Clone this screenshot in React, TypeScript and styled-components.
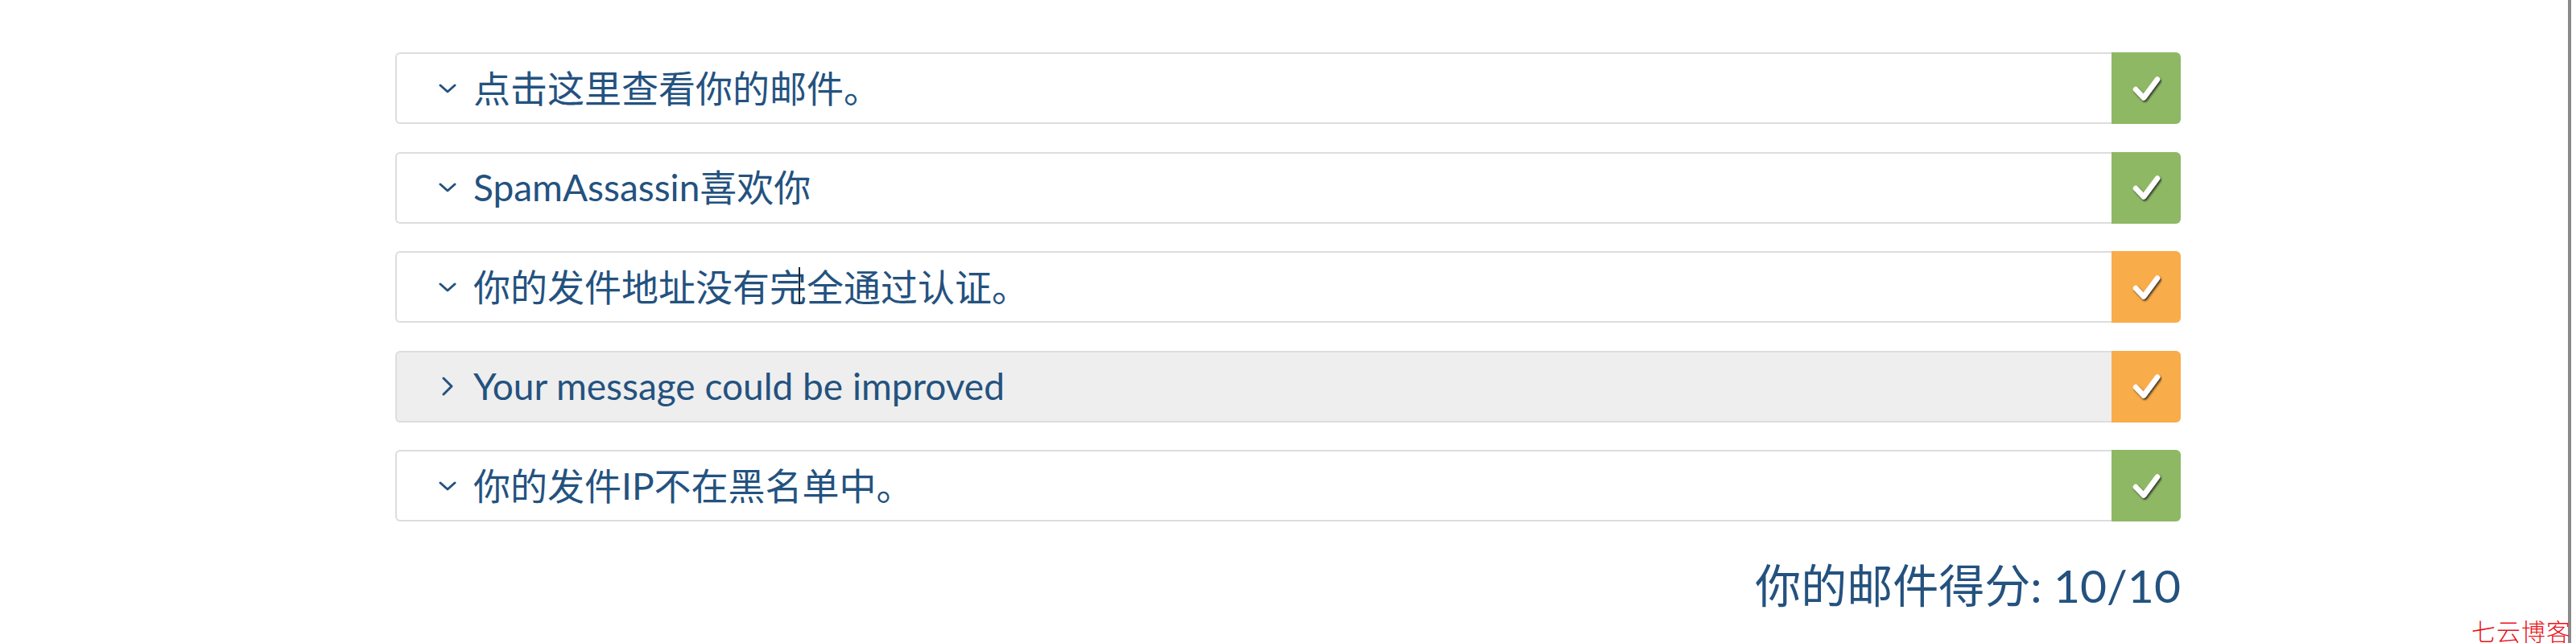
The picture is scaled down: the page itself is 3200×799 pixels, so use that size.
import * as React from "react";
import styled, { createGlobalStyle } from "styled-components";

const GlobalStyle = createGlobalStyle`
    html, body {
        margin: 0;
        padding: 0;
        background: #ffffff;
    }
    body {
        font-family: "Lato", "Noto Sans CJK SC", sans-serif;
        overflow: hidden;
    }
`;

const Page = styled.div`
    position: relative;
    width: 3200px;
    height: 799px;
    padding-top: 65px;
    box-sizing: border-box;
`;

const Report = styled.div`
    width: 2218px;
    margin: 0 auto;
    display: flex;
    flex-direction: column;
    gap: 34.5px;
`;

const Row = styled.div`
    position: relative;
    display: flex;
    height: 89px;
`;

const Header = styled.div<{ $hover: boolean }>`
    flex: 1;
    display: flex;
    align-items: center;
    padding-left: 51px;
    gap: 20px;
    border: 2px solid #dddddd;
    border-right: none;
    border-radius: 6px 0 0 6px;
    background: ${p => (p.$hover ? "#eeeeee" : "#ffffff")};
    color: #24527f;
    font-size: 46px;
    cursor: pointer;
`;

const Chevron = styled.span`
    width: 24px;
    display: flex;
    justify-content: center;
    align-items: center;
    color: #24527f;
`;

const Title = styled.span`
    white-space: nowrap;
    line-height: 1;
`;

const Status = styled.div<{ $tone: "ok" | "warn" }>`
    width: 86px;
    display: flex;
    align-items: center;
    justify-content: center;
    border-radius: 0 6px 6px 0;
    background: ${p => (p.$tone === "ok" ? "#8fb865" : "#f9ac4a")};
`;

const Caret = styled.span`
    position: absolute;
    left: 501px;
    top: 20px;
    width: 2px;
    height: 46px;
    background: #1d2733;
`;

const Score = styled.div`
    margin-top: 45px;
    text-align: right;
    color: #24527f;
    font-size: 57px;
    line-height: 68px;
`;

const Scrollbar = styled.div`
    position: absolute;
    top: 0;
    right: 6px;
    width: 4px;
    height: 100%;
    background: #8a8a8a;
`;

const Watermark = styled.div`
    position: absolute;
    right: 6px;
    bottom: -6px;
    color: #e8141b;
    font-family: "Noto Sans CJK SC", sans-serif;
    font-weight: 300;
    font-size: 30px;
    letter-spacing: 1px;
`;

const Check = () => (
    <svg width="40" height="40" viewBox="0 0 40 40">
        <defs>
            <filter id="checkShadow" x="-30%" y="-30%" width="160%" height="160%">
                <feDropShadow dx="1.5" dy="2" stdDeviation="1" floodColor="#1b1b1b" floodOpacity="0.85" />
            </filter>
        </defs>
        <path
            d="M7 21 L17 31.5 L34 8.5"
            fill="none"
            stroke="#ffffff"
            strokeWidth="6.5"
            strokeLinecap="round"
            strokeLinejoin="round"
            filter="url(#checkShadow)"
        />
    </svg>
);

const ChevronIcon = ({ open }: { open: boolean }) =>
    open ? (
        <svg width="22" height="12" viewBox="0 0 22 12">
            <polyline points="2,2 11,10 20,2" fill="none" stroke="currentColor" strokeWidth="3" strokeLinecap="round" strokeLinejoin="round" />
        </svg>
    ) : (
        <svg width="14" height="24" viewBox="0 0 14 24">
            <polyline points="2,2 12,12 2,22" fill="none" stroke="currentColor" strokeWidth="3" strokeLinecap="round" strokeLinejoin="round" />
        </svg>
    );

type Check = {
    title: string,
    tone: "ok" | "warn",
    open: boolean,
    hover?: boolean,
    caret?: boolean,
};

const checks: Check[] = [
    { title: "点击这里查看你的邮件。", tone: "ok", open: true },
    { title: "SpamAssassin喜欢你", tone: "ok", open: true },
    { title: "你的发件地址没有完全通过认证。", tone: "warn", open: true, caret: true },
    { title: "Your message could be improved", tone: "warn", open: false, hover: true },
    { title: "你的发件IP不在黑名单中。", tone: "ok", open: true },
];

export default function App() {
    return <Page>
        <GlobalStyle />
        <Report>
            {checks.map(c => (
                <Row key={c.title}>
                    <Header $hover={!!c.hover}>
                        <Chevron><ChevronIcon open={c.open} /></Chevron>
                        <Title>{c.title}</Title>
                    </Header>
                    <Status $tone={c.tone}><Check /></Status>
                    {c.caret ? <Caret /> : null}
                </Row>
            ))}
        </Report>
        <Report>
            <Score>你的邮件得分: 10/10</Score>
        </Report>
        <Scrollbar />
        <Watermark>七云博客</Watermark>
    </Page>;
}
